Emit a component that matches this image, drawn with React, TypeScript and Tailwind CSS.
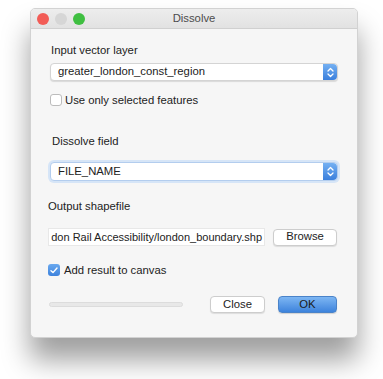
import React from "react";

const Stepper = () => (
  <div className="flex h-full w-[14px] items-center justify-center rounded-r-[4px] bg-gradient-to-b from-[#74b0f2] to-[#3a7fdc]">
    <svg width="7" height="11" viewBox="0 0 7 11" fill="none">
      <path d="M1 4 L3.5 1.5 L6 4" stroke="white" strokeWidth="1.3" strokeLinecap="round" strokeLinejoin="round" />
      <path d="M1 7 L3.5 9.5 L6 7" stroke="white" strokeWidth="1.3" strokeLinecap="round" strokeLinejoin="round" />
    </svg>
  </div>
);

const Select = ({ value, focused }: { value: string; focused?: boolean }) => (
  <div
    className={`flex items-center justify-between rounded-[4px] border bg-white shadow-[0_1px_1px_rgba(0,0,0,0.12)] ${
      focused ? "h-[19px] border-[#b3cdee] ring-2 ring-[#d6e5f7]" : "h-[18px] border-[#d4d4d4]"
    }`}
  >
    <span className="pl-[7px] text-[11.3px] leading-none text-[#222]">{value}</span>
    <Stepper />
  </div>
);

const Check = ({ checked }: { checked?: boolean }) =>
  checked ? (
    <div className="flex h-[12px] w-[12px] items-center justify-center rounded-[3px] bg-gradient-to-b from-[#6aa9ef] to-[#3d82dc]">
      <svg width="8" height="7" viewBox="0 0 8 7" fill="none">
        <path d="M1 3.8 L3 5.6 L7 1" stroke="white" strokeWidth="1.4" strokeLinecap="round" strokeLinejoin="round" />
      </svg>
    </div>
  ) : (
    <div className="h-[12px] w-[12px] rounded-[3px] border border-[#bcbcbc] bg-white" />
  );

export default function App() {
  return (
    <div
      className="h-[379px] w-[383px] bg-white pl-[30px] pt-[8px]"
      style={{ fontFamily: '"Liberation Sans", Arial, sans-serif' }}
    >
      <div className="w-[328px] overflow-hidden rounded-[5px] border border-[#d2d2d2] bg-[#f6f6f6] shadow-[0_22px_28px_rgba(0,0,0,0.38)]">
        {/* title bar */}
        <div className="relative flex h-[20px] items-center border-b border-[#d0d0d0] bg-gradient-to-b from-[#ededed] to-[#e2e2e2]">
          <div className="flex gap-[6px] pl-[6px]">
            <span className="h-[12px] w-[12px] rounded-full bg-[#f25c56]" />
            <span className="h-[12px] w-[12px] rounded-full bg-[#d6d6d6]" />
            <span className="h-[12px] w-[12px] rounded-full bg-[#3fbf41]" />
          </div>
          <span className="absolute left-0 right-0 text-center text-[11.3px] text-[#4c4c4c]">Dissolve</span>
        </div>

        {/* content */}
        <div className="flex flex-col pb-[24px] pl-[17px] pr-[19px] pt-[14px]">
          <div className="ml-[3px] h-[14px] text-[11.3px] leading-[14px] text-[#222]">Input vector layer</div>
          <div className="ml-[2px] mt-[6px]">
            <Select value="greater_london_const_region" />
          </div>
          <div className="ml-[2px] mt-[12px] flex h-[14px] items-center gap-[3px]">
            <Check />
            <span className="text-[11.3px] leading-[14px] text-[#222]">Use only selected features</span>
          </div>

          <div className="ml-[4px] mt-[27px] h-[14px] text-[11.3px] leading-[14px] text-[#222]">Dissolve field</div>
          <div className="ml-[2px] mt-[14px]">
            <Select value="FILE_NAME" focused />
          </div>

          <div className="mt-[18px] h-[14px] text-[11.3px] leading-[14px] text-[#222]">Output shapefile</div>
          <div className="mt-[15px] flex items-center">
            <div className="flex h-[18px] w-[217px] items-center justify-end overflow-hidden border border-[#e8e8e8] bg-white pr-[2px]">
              <span className="whitespace-nowrap text-[11px] leading-none text-[#222]">
                don Rail Accessibility/london_boundary.shp
              </span>
            </div>
            <button className="ml-[8px] h-[17px] w-[64px] rounded-[4px] border border-[#cdcdcd] bg-white text-[11.3px] leading-none text-[#222] shadow-[0_1px_1px_rgba(0,0,0,0.1)]">
              Browse
            </button>
          </div>

          <div className="mt-[17px] flex h-[14px] items-center gap-[4px]">
            <Check checked />
            <span className="text-[11.3px] leading-[14px] text-[#222]">Add result to canvas</span>
          </div>

          <div className="mt-[19px] flex h-[17px] items-center">
            <div className="ml-[1px] h-[5px] w-[134px] rounded-full border border-[#dcdcdc] bg-[#e8e8e8]" />
            <button className="ml-[27px] h-[17px] w-[55px] rounded-[4px] border border-[#cdcdcd] bg-white text-[11.3px] leading-none text-[#222] shadow-[0_1px_1px_rgba(0,0,0,0.1)]">
              Close
            </button>
            <button className="ml-[13px] h-[17px] w-[59px] rounded-[4px] border border-[#4a83c9] bg-gradient-to-b from-[#7db6f3] to-[#3d83dc] text-[11.3px] leading-none text-[#1a1a1a] shadow-[0_1px_1px_rgba(0,0,0,0.15)]">
              OK
            </button>
          </div>
        </div>
      </div>
    </div>
  );
}
